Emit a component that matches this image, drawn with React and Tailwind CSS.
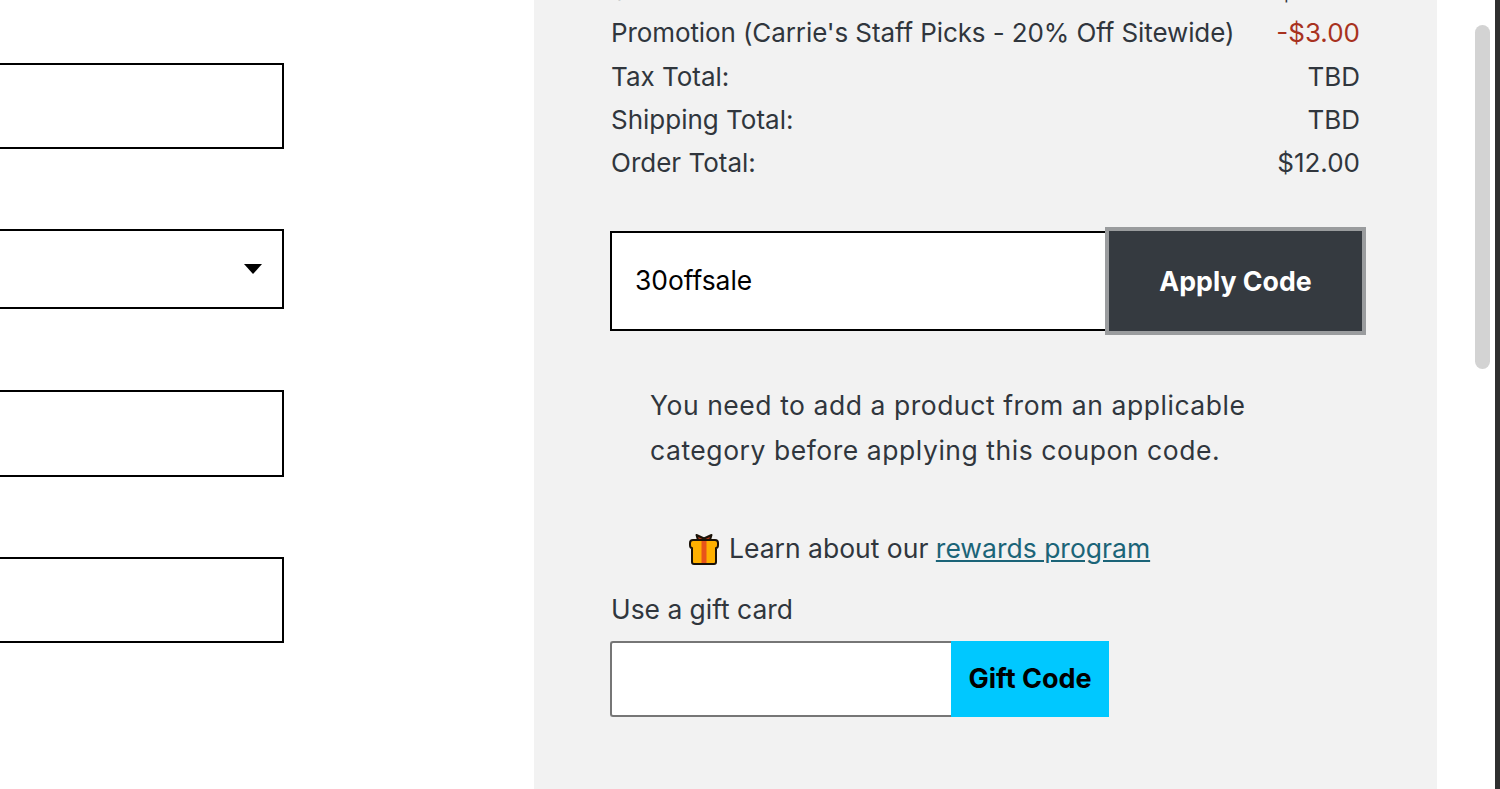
const font = "font-['Inter','Liberation_Sans',sans-serif]";

function GiftIcon() {
  return (
    <svg width="30" height="33" viewBox="0 0 30 33" className="shrink-0">
      <path d="M9 7 L7.5 2 L15 5.5 L22.5 2 L21 7 Z" fill="#b5391a" stroke="#1a1208" strokeWidth="2" strokeLinejoin="round" />
      <path d="M4 7 H26 Q29 7 29 10 V12 Q29 15 27 15 V29 Q27 31 25 31 H5 Q3 31 3 29 V15 Q1 15 1 12 V10 Q1 7 4 7 Z" fill="#ffb000" stroke="#1a1208" strokeWidth="2" strokeLinejoin="round" />
      <rect x="12.5" y="8" width="5" height="22" fill="#e8541a" />
    </svg>
  );
}

function SummaryRow({ label, value, labelClass = '', valueClass = '', rowClass = 'h-[43px]' }) {
  return (
    <div className={`flex justify-between items-center ${rowClass}`}>
      <span className={labelClass}>{label}</span>
      <span className={valueClass}>{value}</span>
    </div>
  );
}

export default function App() {
  return (
    <div className={`${font} relative flex h-[789px] w-[1500px] overflow-hidden bg-white text-[#30363d] text-[26px]`}>
      {/* left form fields, cut by the window edge */}
      <div className="w-[534px] shrink-0 pt-[63px]">
        <div className="-ml-2 w-[292px] h-[86px] border-2 border-black" />
        <div className="-ml-2 mt-[80px] w-[292px] h-[80px] border-2 border-black flex items-center justify-end pr-[20px]">
          <div className="w-0 h-0 border-x-[9px] border-x-transparent border-t-[10px] border-t-black" />
        </div>
        <div className="-ml-2 mt-[81px] w-[292px] h-[87px] border-2 border-black" />
        <div className="-ml-2 mt-[80px] w-[292px] h-[86px] border-2 border-black" />
      </div>

      {/* order summary */}
      <div className="w-[903px] shrink-0 bg-[#f2f2f2] px-[77px] -mt-[30px] h-[830px]">
        <div className="w-[749px]">
          <SummaryRow label="Sub Total:" value="$15.00" rowClass="h-[41px]" />
          <SummaryRow
            label="Promotion (Carrie's Staff Picks - 20% Off Sitewide)"
            labelClass="tracking-[-0.1px]"
            value="-$3.00"
            valueClass="text-[#a8321f]"
            rowClass="h-[43px] mb-px"
          />
          <SummaryRow label="Tax Total:" value="TBD" />
          <SummaryRow label="Shipping Total:" value="TBD" />
          <SummaryRow label="Order Total:" value="$12.00" />
        </div>

        <div className="flex mt-[47px] h-[100px] w-[752px] -ml-px">
          <div className="w-[499px] border-2 border-black bg-white flex items-center pl-[23px] text-black text-[26.4px]">30offsale</div>
          <button className="w-[253px] bg-[#353a40] text-white font-bold outline-[4px] outline-[#9a9c9e] text-[26.7px]">Apply Code</button>
        </div>

        <div className="mt-[52px] ml-[39px] leading-[45px] text-[26.5px] tracking-[0.55px]">
          <p>You need to add a product from an applicable</p>
          <p>category before applying this coupon code.</p>
        </div>

        <div className="mt-[56px] ml-[78px] flex items-center gap-[10px] h-[40px] text-[26.5px]">
          <GiftIcon />
          <span>Learn about our <a className="text-[#1b6478] underline">rewards program</a></span>
        </div>

        <div className="mt-[23px] h-[36px] flex items-center text-[26.4px]">Use a gift card</div>

        <div className="flex mt-[13px] h-[76px] w-[499px] -ml-px">
          <div className="w-[341px] bg-white border-2 border-r-0 border-[#767676] rounded-l-[3px]" />
          <button className="w-[158px] bg-[#00c8ff] text-black font-bold text-[27px]">Gift Code</button>
        </div>
      </div>

      {/* browser scrollbar and the dark window edge */}
      <div className="ml-[38px] mt-[25px] w-[15px] h-[344px] shrink-0 rounded-full bg-[#d3d3d3]" />
      <div className="ml-[5px] w-[5px] h-full shrink-0 bg-[#2f2f2f]" />
    </div>
  );
}
